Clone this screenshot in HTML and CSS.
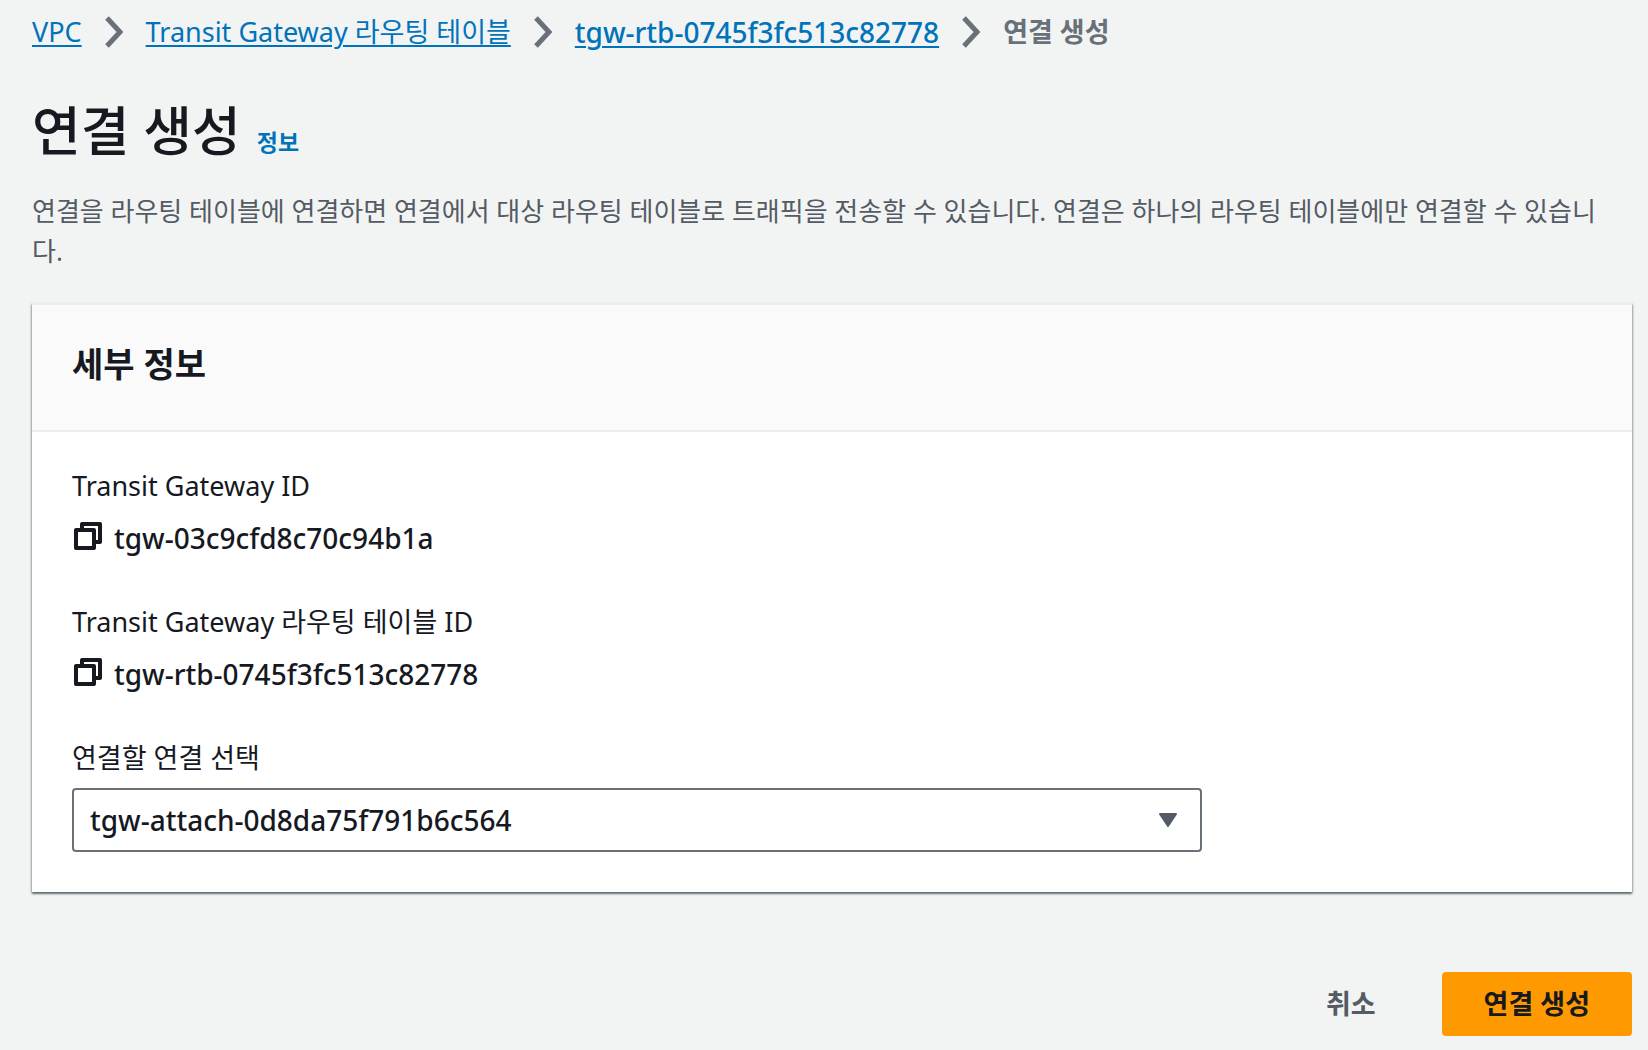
FILE: index.html
```
<!DOCTYPE html>
<html lang="ko">
<head>
    <meta charset="UTF-8">
    <meta name="viewport" content="width=device-width, initial-scale=1.0">
    <title>연결 생성</title>
    <link rel="stylesheet" href="styles.css">
</head>
<body>
    <nav class="breadcrumbs">
        <a href="#">VPC</a>
        <svg class="chevron" viewBox="0 0 20 32"><path d="M3 2l13 14L3 30"/></svg>
        <a href="#">Transit Gateway 라우팅 테이블</a>
        <svg class="chevron" viewBox="0 0 20 32"><path d="M3 2l13 14L3 30"/></svg>
        <a href="#" class="resource-id">tgw-rtb-0745f3fc513c82778</a>
        <svg class="chevron" viewBox="0 0 20 32"><path d="M3 2l13 14L3 30"/></svg>
        <span class="current">연결 생성</span>
    </nav>

    <header class="page-header">
        <div class="title-row">
            <h1>연결 생성</h1>
            <a href="#" class="info-link">정보</a>
        </div>
        <p>연결을 라우팅 테이블에 연결하면 연결에서 대상 라우팅 테이블로 트래픽을 전송할 수 있습니다. 연결은 하나의 라우팅 테이블에만 연결할 수 있습니다.</p>
    </header>

    <form>
        <section class="card">
            <div class="card-header">
                <h2>세부 정보</h2>
            </div>
            <div class="card-body">
                <div class="field">
                    <div class="label">Transit Gateway ID</div>
                    <div class="value">
                        <button type="button" class="copy-btn" aria-label="복사">
                            <svg viewBox="0 0 28 28"><path d="M8 7V2h18v18h-5M2 8h18v18H2z"/></svg>
                        </button>
                        <span class="resource-id">tgw-03c9cfd8c70c94b1a</span>
                    </div>
                </div>
                <div class="field">
                    <div class="label">Transit Gateway 라우팅 테이블 ID</div>
                    <div class="value">
                        <button type="button" class="copy-btn" aria-label="복사">
                            <svg viewBox="0 0 28 28"><path d="M8 7V2h18v18h-5M2 8h18v18H2z"/></svg>
                        </button>
                        <span class="resource-id">tgw-rtb-0745f3fc513c82778</span>
                    </div>
                </div>
                <div class="field">
                    <label class="label" for="attachment">연결할 연결 선택</label>
                    <div class="select-box">
                        <select id="attachment" class="resource-id">
                            <option>tgw-attach-0d8da75f791b6c564</option>
                        </select>
                        <svg class="caret" viewBox="0 0 20 16"><path d="M2 2h16l-8 12z"/></svg>
                    </div>
                </div>
            </div>
        </section>

        <div class="actions">
            <button type="button" class="cancel-btn">취소</button>
            <button type="submit" class="create-btn">연결 생성</button>
        </div>
    </form>
</body>
</html>
```

FILE: styles.css
```
* {
    box-sizing: border-box;
}
body {
    margin: 0;
    padding: 12px 16px 12px 32px;
    background-color: #f2f4f3;
    color: #16191f;
    font-family: "Noto Sans", "Noto Sans CJK KR", sans-serif;
    font-size: 27px;
    line-height: 40px;
}
h1, h2, p {
    margin: 0;
}
a {
    color: #0073bb;
}
button, select {
    font: inherit;
    color: inherit;
    cursor: pointer;
}
.breadcrumbs {
    display: flex;
    flex-wrap: wrap;
    align-items: center;
    column-gap: 22px;
}
.breadcrumbs a {
    text-decoration-thickness: 2px;
    text-underline-offset: 3px;
}
.breadcrumbs .current {
    color: #687078;
    font-weight: bold;
}
.resource-id {
    font-size: 28px;
    font-weight: 500;
}
.chevron {
    width: 20px;
    height: 32px;
    fill: none;
    stroke: #687078;
    stroke-width: 5;
}
.page-header {
    margin-top: 43px;
}
.title-row {
    display: flex;
    align-items: baseline;
    gap: 16px;
    margin-bottom: 24px;
}
h1 {
    font-size: 53px;
    font-weight: 500;
    line-height: 72px;
}
.info-link {
    font-size: 23px;
    font-weight: bold;
    text-decoration: none;
}
.page-header p {
    padding-right: 16px;
    color: #545b64;
    font-size: 26px;
    word-break: break-all;
}
.card {
    margin-top: 32px;
    background-color: #fff;
    box-shadow: 0 2px 2px 0 rgba(0, 28, 36, 0.5), 1px 1px 2px 0 rgba(0, 28, 36, 0.2), -1px 1px 2px 0 rgba(0, 28, 36, 0.2);
}
.card-header {
    padding: 35px 40px 42px;
    background-color: #fafafa;
    border-top: 2px solid #eaeded;
    border-bottom: 2px solid #eaeded;
}
h2 {
    font-size: 34px;
    line-height: 48px;
}
.card-body {
    display: flex;
    flex-direction: column;
    gap: 44px;
    padding: 34px 40px 40px;
}
.label {
    display: block;
    margin-bottom: 12px;
}
label.label {
    margin-bottom: 10px;
}
.value {
    display: flex;
    align-items: center;
    gap: 12px;
}
.copy-btn {
    display: flex;
    padding: 0 0 4px 2px;
    border: none;
    background: none;
}
.copy-btn svg {
    width: 28px;
    height: 28px;
    fill: none;
    stroke: #16191f;
    stroke-width: 4;
    stroke-linejoin: round;
}
.select-box {
    display: grid;
    align-items: center;
    width: calc(75% - 10px);
}
.select-box select, .caret {
    grid-area: 1 / 1;
}
.select-box select {
    width: 100%;
    height: 64px;
    padding: 0 64px 0 16px;
    border: 2px solid #687078;
    border-radius: 4px;
    background-color: #fff;
    appearance: none;
}
.caret {
    justify-self: end;
    width: 20px;
    height: 16px;
    margin-right: 24px;
    fill: #545b64;
    stroke: #545b64;
    stroke-width: 2;
    stroke-linejoin: round;
    pointer-events: none;
}
.actions {
    display: flex;
    justify-content: flex-end;
    gap: 24px;
    margin-top: 80px;
}
.actions button {
    padding: 12px 42px;
    border: none;
    border-radius: 4px;
    font-weight: bold;
}
.cancel-btn {
    background: none;
    color: #545b64;
}
.create-btn {
    background-color: #ff9900;
}
```
